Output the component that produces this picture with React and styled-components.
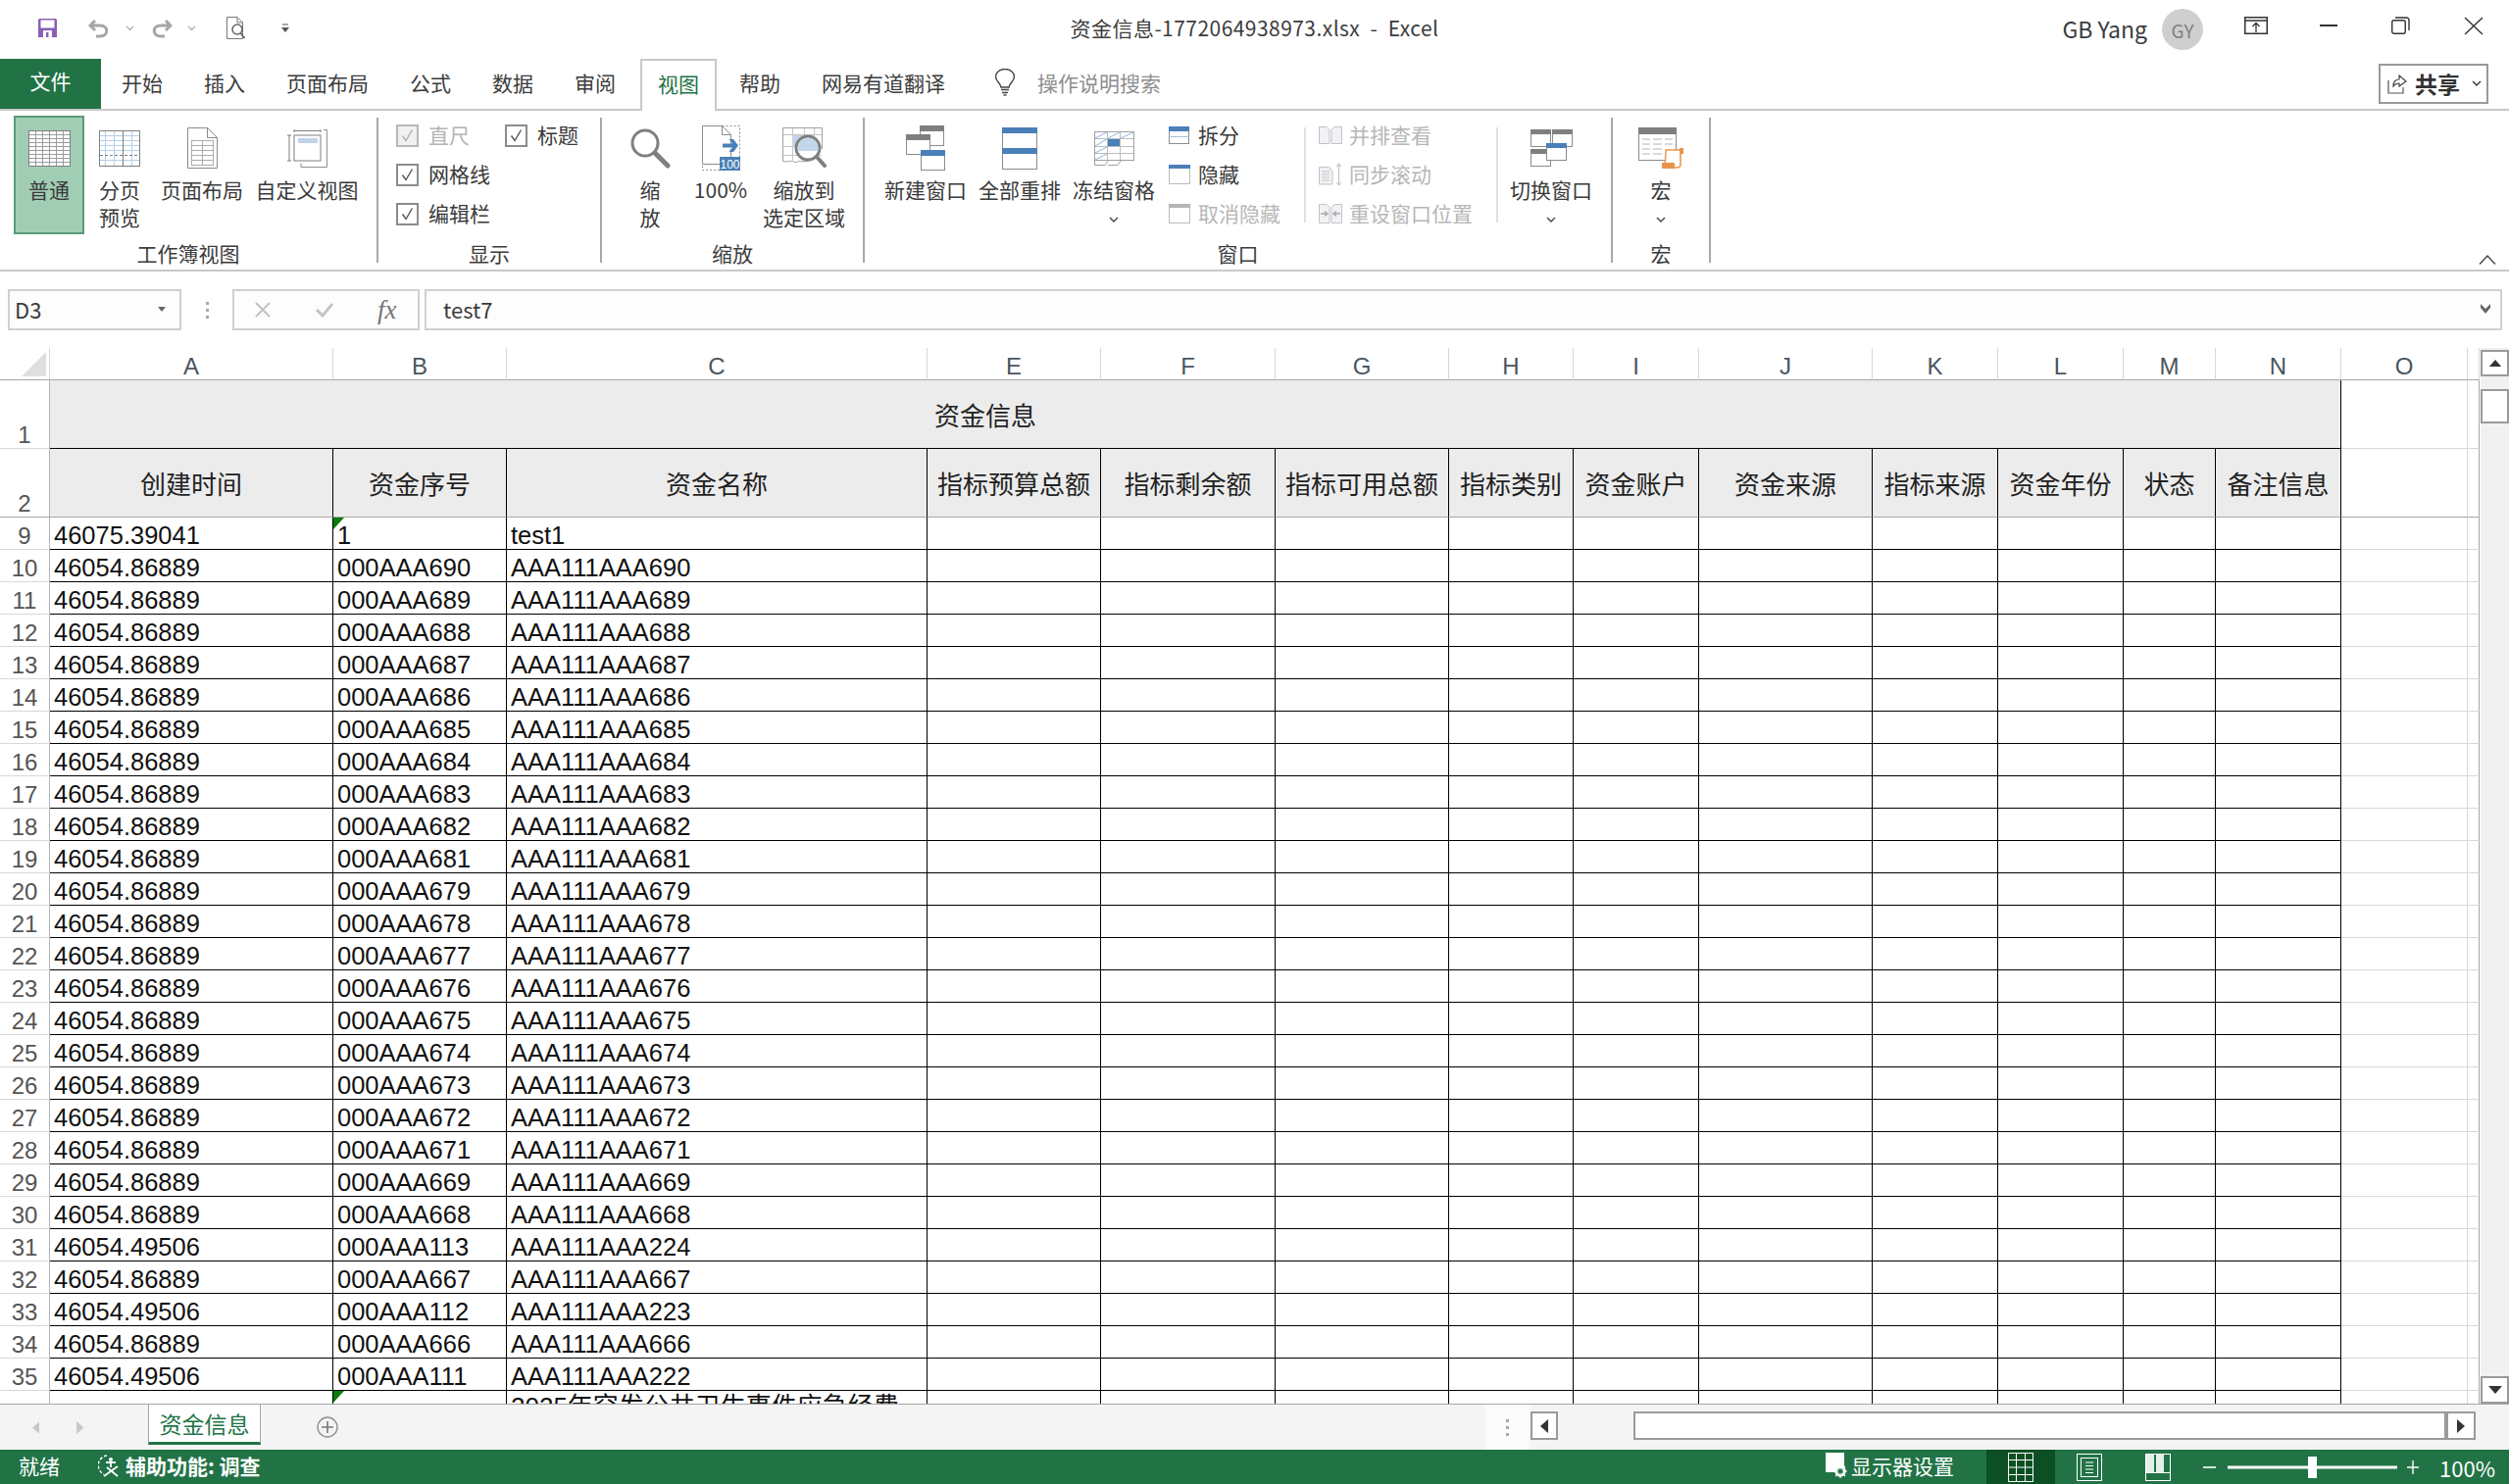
import React from 'react';
import styled, { createGlobalStyle } from 'styled-components';

const UI_FONT = '"Noto Sans CJK SC", "Noto Sans", sans-serif';
const CELL_FONT = '"Liberation Sans", "Noto Sans CJK SC", sans-serif';
const GREEN = '#217346';

const GlobalStyle = createGlobalStyle`
  html, body {
    margin: 0;
    padding: 0;
    background: #fff;
    overflow: hidden;
  }
  body {
    font-family: ${UI_FONT};
    color: #3a3a3a;
  }
`;

const Window = styled.div`
  width: 2559px;
  height: 1514px;
  display: flex;
  flex-direction: column;
  overflow: hidden;
  background: #fff;
  font-size: 21px;
`;

/* title bar */
const TitleBar = styled.div`
  height: 60px;
  display: grid;
  grid-template-columns: 1fr auto 1fr;
  align-items: center;
`;

const Qat = styled.div`
  display: flex;
  align-items: center;
  padding: 0 0 3px 39px;
`;

const QatSlot = styled.span`
  display: inline-flex;
  margin-left: ${(p) => p.$left || 0}px;
`;

const TitleText = styled.div`
  font-size: 21px;
  line-height: 28px;
  letter-spacing: 0.45px;
  padding-bottom: 5px;
  white-space: pre;
  color: #3c3c3c;
`;

const TitleRight = styled.div`
  display: flex;
  align-items: center;
  justify-content: flex-end;
  padding-right: 26px;
`;

const UserName = styled.span`
  font-size: 23px;
  padding-bottom: 2px;
  color: #3c3c3c;
`;

const Avatar = styled.span`
  width: 42px;
  height: 42px;
  margin-left: 15px;
  border-radius: 50%;
  background: #cfcfcf;
  color: #808080;
  font-size: 19px;
  display: flex;
  align-items: center;
  justify-content: center;
`;

const WinButton = styled.span`
  display: inline-flex;
  margin-left: ${(p) => p.$left}px;
  margin-top: -8px;
`;

/* ribbon tabs */
const TabBar = styled.div`
  height: 53px;
  box-sizing: border-box;
  display: flex;
  border-bottom: 2px solid #c9c9c9;
`;

const FileTab = styled.div`
  width: 103px;
  height: 51px;
  background: ${GREEN};
  color: #fff;
  display: flex;
  align-items: center;
  justify-content: center;
  padding-bottom: 7px;
  box-sizing: border-box;
`;

const RibbonTab = styled.div`
  height: 51px;
  box-sizing: border-box;
  padding: 0 21px 3px;
  display: flex;
  align-items: center;
  color: #3c3c3c;
`;

const ActiveTab = styled.div`
  height: 53px;
  box-sizing: border-box;
  margin: 0 2px 0 4px;
  padding: 0 16px 5px;
  display: flex;
  align-items: center;
  color: ${GREEN};
  background: #fff;
  border: 2px solid #c9c9c9;
  border-bottom: none;
`;

const SearchHint = styled.div`
  display: flex;
  align-items: center;
  gap: 22px;
  margin-left: 29px;
  height: 51px;
  box-sizing: border-box;
  padding-bottom: 3px;
  color: #8e8e8e;
`;

const ShareButton = styled.div`
  margin: 5px 21px 0 auto;
  width: 112px;
  height: 41px;
  box-sizing: border-box;
  border: 2px solid #9a9a9a;
  display: flex;
  align-items: center;
  padding: 0 0 2px 7px;
  font-weight: 700;
  font-size: 23px;
  color: #333;
`;

const ShareLabel = styled.span`
  margin: 0 12px 0 8px;
`;

/* ribbon */
const Ribbon = styled.div`
  height: 164px;
  box-sizing: border-box;
  padding-top: 5px;
  display: flex;
  align-items: flex-start;
  border-bottom: 2px solid #c9c9c9;
`;

const Group = styled.div`
  width: ${(p) => p.$w}px;
  height: 154px;
  display: flex;
  flex-direction: column;
`;

const GroupBody = styled.div`
  height: 128px;
  display: flex;
  padding-left: ${(p) => p.$pad || 0}px;
`;

const GroupLabel = styled.div`
  height: 24px;
  line-height: 24px;
  text-align: center;
  color: #3c3c3c;
`;

const GroupSep = styled.div`
  width: 2px;
  height: 148px;
  margin-top: 2px;
  background: #a8a8a8;
  flex: none;
`;

const LargeButton = styled.div`
  width: ${(p) => p.$w}px;
  height: 121px;
  box-sizing: border-box;
  flex: none;
  display: flex;
  flex-direction: column;
  align-items: center;
  border: 2px solid ${(p) => (p.$active ? '#5a9a78' : 'transparent')};
  background: ${(p) => (p.$active ? '#a2cdb5' : 'transparent')};
`;

const IconSlot = styled.div`
  height: 62px;
  margin-bottom: -3px;
  flex: none;
  display: flex;
  align-items: center;
  justify-content: center;
`;

const ButtonLabel = styled.div`
  line-height: 28px;
  text-align: center;
  white-space: nowrap;
  color: #3a3a3a;
`;

const ChevronLine = styled.div`
  height: 28px;
  margin-top: 3px;
  display: flex;
  align-items: center;
  justify-content: center;
`;

const CheckGrid = styled.div`
  display: grid;
  grid-template-columns: 111px 80px;
  grid-auto-rows: 40px;
  padding-left: 18px;
`;

const CheckRow = styled.div`
  display: flex;
  align-items: center;
  gap: 10px;
  color: ${(p) => (p.$off ? '#b4b4b4' : '#3a3a3a')};
`;

const CheckBox = styled.span`
  width: 23px;
  height: 23px;
  box-sizing: border-box;
  border: 2px solid ${(p) => (p.$off ? '#b8b8b8' : '#8c8c8c')};
  background: ${(p) => (p.$off ? '#f1f1f1' : '#fff')};
  display: flex;
  align-items: center;
  justify-content: center;
`;

const ActionText = styled.span`
  margin-top: -3px;
`;

const SmallColumn = styled.div`
  width: ${(p) => p.$w}px;
  flex: none;
  box-sizing: border-box;
  padding-left: ${(p) => p.$pad}px;
`;

const SmallAction = styled.div`
  height: 40px;
  display: flex;
  align-items: center;
  white-space: nowrap;
  color: ${(p) => (p.$off ? '#b6b6b6' : '#3a3a3a')};
`;

const SmallIcon = styled.span`
  width: ${(p) => p.$w}px;
  display: inline-flex;
  flex: none;
`;

const ThinSep = styled.div`
  width: 2px;
  height: 97px;
  margin-top: 12px;
  background: #e0e0e0;
  flex: none;
`;

const CollapseArrow = styled.div`
  margin: 142px 13px 0 auto;
  display: flex;
`;

/* formula bar */
const FormulaBar = styled.div`
  height: 42px;
  margin-top: 18px;
  display: flex;
  padding: 0 7px 0 8px;
`;

const NameBox = styled.div`
  width: 177px;
  box-sizing: border-box;
  border: 2px solid #d0d0d0;
  background: #fdfdfd;
  display: flex;
  align-items: center;
  justify-content: space-between;
  padding: 0 14px 2px 5px;
  font-size: 22px;
`;

const BarDots = styled.div`
  width: 52px;
  display: flex;
  align-items: center;
  justify-content: center;
`;

const FnBox = styled.div`
  width: 191px;
  box-sizing: border-box;
  border: 2px solid #d0d0d0;
  background: #fdfdfd;
  display: flex;
  align-items: center;
  gap: 44px;
  padding-left: 20px;
  margin-right: 5px;
`;

const FnMark = styled.span`
  font-family: "Liberation Serif", serif;
  font-style: italic;
  font-size: 27px;
  line-height: 30px;
  color: #777;
`;

const FormulaInput = styled.div`
  flex: 1;
  box-sizing: border-box;
  border: 2px solid #d0d0d0;
  background: #fdfdfd;
  display: flex;
  align-items: center;
  justify-content: space-between;
  padding: 0 9px 2px 17px;
  font-size: 22px;
`;

/* sheet */
const SheetArea = styled.div`
  height: 1077px;
  margin-top: 18px;
  display: flex;
`;

const SheetGrid = styled.div`
  width: 2530px;
  height: 1077px;
  overflow: hidden;
  display: grid;
  grid-template-columns: 51px 289px 177px 429px 177px 178px 177px 127px 128px 177px 128px 128px 94px 128px 129px 12px;
  grid-template-rows: 33px 70px 70px repeat(27, 33px) 60px;
  align-content: start;
`;

const CornerCell = styled.div`
  box-sizing: border-box;
  position: relative;
  border-bottom: 1px solid #a6a6a6;
  border-right: 1px solid #d8d8d8;
  &::after {
    content: '';
    position: absolute;
    right: 3px;
    bottom: 3px;
    border-style: solid;
    border-width: 0 0 25px 25px;
    border-color: transparent transparent #dfdfdf transparent;
  }
`;

const ColHead = styled.div`
  box-sizing: border-box;
  border-bottom: 1px solid #a6a6a6;
  border-right: 1px solid #d8d8d8;
  font-family: ${CELL_FONT};
  font-size: 24px;
  line-height: 32px;
  padding-top: 3px;
  text-align: center;
  color: #4a5560;
`;

const RowHead = styled.div`
  box-sizing: border-box;
  border-bottom: 1px solid ${(p) => (p.$frozen ? '#a6a6a6' : '#d8d8d8')};
  border-right: 1px solid #b4b4b4;
  font-family: ${CELL_FONT};
  font-size: 24px;
  line-height: 26px;
  text-align: center;
  color: #555;
  display: flex;
  align-items: flex-end;
  justify-content: center;
`;

const TitleCell = styled.div`
  grid-column: 2 / 15;
  box-sizing: border-box;
  background: #ececec;
  border-bottom: 1px solid #000;
  border-right: 1px solid #000;
  display: flex;
  align-items: center;
  padding-left: 902px;
  font-size: 26px;
  color: #222;
`;

const HeadCell = styled.div`
  box-sizing: border-box;
  background: #ececec;
  border-bottom: 1px solid #a6a6a6;
  border-right: 1px solid #000;
  display: flex;
  align-items: center;
  justify-content: center;
  font-size: 26px;
  white-space: nowrap;
  color: #222;
`;

const DataCell = styled.div`
  position: relative;
  box-sizing: border-box;
  overflow: hidden;
  border-bottom: 1px solid #000;
  border-right: 1px solid #000;
  padding-left: 4px;
  font-family: ${CELL_FONT};
  font-size: ${(p) => (p.$tall ? '26px' : '25.5px')};
  line-height: ${(p) => (p.$tall ? '33px' : '36px')};
  white-space: nowrap;
  color: #111;
  &::before {
    content: ${(p) => (p.$flag ? "''" : 'none')};
    position: absolute;
    left: 0;
    top: 0;
    border-style: solid;
    border-width: 12px 11px 0 0;
    border-color: #0a7d0a transparent transparent transparent;
  }
`;

const BlankCell = styled.div`
  box-sizing: border-box;
  border-bottom: 1px solid ${(p) => (p.$frozen ? '#a6a6a6' : '#d8d8d8')};
  border-right: 1px solid ${(p) => (p.$edge ? '#a6a6a6' : '#d8d8d8')};
`;

const VScroll = styled.div`
  width: 29px;
  background: #f1f1f1;
  display: flex;
  flex-direction: column;
`;

const ScrollButton = styled.div`
  box-sizing: border-box;
  flex: none;
  width: ${(p) => p.$w || 29}px;
  height: ${(p) => p.$h || 29}px;
  margin-top: ${(p) => p.$top || 0};
  border: 2px solid #9a9a9a;
  background: #fff;
  display: flex;
  align-items: center;
  justify-content: center;
`;

/* sheet tabs */
const TabStrip = styled.div`
  height: 47px;
  box-sizing: border-box;
  background: #f4f4f4;
  border-top: 1px solid #a6a6a6;
  display: flex;
`;

const TabNav = styled.div`
  width: 151px;
  height: 46px;
  display: flex;
  align-items: center;
  padding-left: 33px;
  box-sizing: border-box;
  gap: 38px;
`;

const SheetTab = styled.div`
  width: 115px;
  height: 41px;
  box-sizing: border-box;
  background: #fff;
  border-left: 1px solid #a6a6a6;
  border-right: 1px solid #a6a6a6;
  border-bottom: 3px solid ${GREEN};
  color: ${GREEN};
  font-size: 23px;
  display: flex;
  align-items: center;
  justify-content: center;
`;

const AddSheet = styled.div`
  margin-left: 57px;
  height: 46px;
  display: flex;
  align-items: center;
`;

const GripZone = styled.div`
  margin-left: auto;
  width: 45px;
  height: 46px;
  background: #fbfbfb;
  display: flex;
  align-items: center;
  justify-content: center;
`;

const HScroll = styled.div`
  display: flex;
  margin: 7px 34px 0 1px;
  height: 29px;
`;

const HThumb = styled.div`
  width: 829px;
  height: 29px;
  margin-left: 77px;
  box-sizing: border-box;
  border: 2px solid #9a9a9a;
  background: #fff;
`;

/* status bar */
const StatusBar = styled.div`
  height: 35px;
  background: ${GREEN};
  color: #fff;
  display: flex;
  align-items: center;
  font-size: 21px;
`;

const StatusReady = styled.span`
  margin: -3px 0 0 19px;
`;

const AccessItem = styled.span`
  margin: -3px 0 0 39px;
  display: flex;
  align-items: center;
  gap: 5px;
  font-weight: 700;
`;

const DisplayItem = styled.span`
  margin: -3px 0 0 auto;
  display: flex;
  align-items: center;
  gap: 4px;
`;

const ViewButton = styled.span`
  width: 70px;
  height: 35px;
  margin-left: ${(p) => p.$left || 0}px;
  background: ${(p) => (p.$active ? '#0b4f22' : 'transparent')};
  display: flex;
  align-items: center;
  justify-content: center;
`;

const ZoomSlider = styled.span`
  display: flex;
  margin-left: 11px;
`;

const ZoomPercent = styled.span`
  margin: 0 14px 0 21px;
  font-size: 22px;
`;

/* drawings */
const Lines = ({ xs = [], ys = [], x1, x2, y1, y2, stroke, dash }) => (
  <g stroke={stroke} strokeWidth="1" strokeDasharray={dash}>
    {xs.map((x) => <line key={`x${x}`} x1={x} x2={x} y1={y1} y2={y2} />)}
    {ys.map((y) => <line key={`y${y}`} y1={y} y2={y} x1={x1} x2={x2} />)}
  </g>
);

const NormalIcon = () => (
  <svg width="43" height="37" viewBox="0 0 43 37">
    <rect x=".5" y=".5" width="42" height="36" fill="#fff" stroke="#7f7f7f" />
    <Lines xs={[7.5, 14.5, 21.5, 28.5, 35.5]} ys={[4.5, 8.5, 12.5, 16.5, 20.5, 24.5, 28.5, 32.5]} x1={1} x2={42} y1={1} y2={36} stroke="#9c9c9c" />
  </svg>
);

const PageBreakIcon = () => (
  <svg width="42" height="37" viewBox="0 0 42 37">
    <rect x=".5" y=".5" width="41" height="36" fill="#fff" stroke="#7f7f7f" />
    <Lines xs={[6.5, 15.5, 33.5]} ys={[5.5, 10.5, 15.5, 20.5, 30.5]} x1={1} x2={41} y1={1} y2={36} stroke="#b6cfe9" />
    <line x1="24.5" x2="24.5" y1="1" y2="36" stroke="#7f7f7f" />
    <line x1="1" x2="41" y1="25.5" y2="25.5" stroke="#7f7f7f" strokeDasharray="3 2" />
  </svg>
);

const PageLayoutIcon = () => (
  <svg width="31" height="43" viewBox="0 0 31 43">
    <path d="M.5.5H20.5L30.5 10.5V41.5H.5Z" fill="#fff" stroke="#8c8c8c" />
    <path d="M20.5.5V10.5H30.5" fill="none" stroke="#8c8c8c" />
    <rect x="4.5" y="13.5" width="22" height="25" fill="none" stroke="#ababab" />
    <Lines xs={[15.5]} ys={[18.5, 23.5, 28.5, 33.5]} x1={5} x2={26} y1={14} y2={38} stroke="#ababab" />
  </svg>
);

const CustomViewIcon = () => (
  <svg width="42" height="40" viewBox="0 0 42 40">
    <rect x="8" y="7" width="27" height="26" fill="#fff" stroke="#7f7f7f" />
    <rect x="12" y="10" width="20" height="5" fill="#c0d4e8" />
    <path d="M8 1V4M35 1V4M8 2.5H35M1 7H5M3 7V33M1 33H5" fill="none" stroke="#7f7f7f" />
    <path d="M38 1.5H41.5V39.5H15V35.5" fill="none" stroke="#8f8f8f" />
  </svg>
);

const MagnifierIcon = () => (
  <svg width="41" height="41" viewBox="0 0 41 41">
    <circle cx="15" cy="15" r="13" fill="#fff" stroke="#7f7f7f" strokeWidth="3" />
    <line x1="25" y1="25" x2="38" y2="38" stroke="#7f7f7f" strokeWidth="5" strokeLinecap="round" />
  </svg>
);

const HundredIcon = () => (
  <svg width="39" height="46" viewBox="0 0 39 46">
    <path d="M20.5.5H38.5V32M18 45.5H.5V39" fill="none" stroke="#8f8f8f" strokeDasharray="2 2" />
    <path d="M.5 39.5V.5H20.5L29.5 9.5V19M29.5 24V32M.5 39.5H18" fill="#fff" stroke="#8c8c8c" />
    <path d="M20.5.5V9.5H29.5" fill="none" stroke="#8c8c8c" />
    <path d="M21 18.5H31L27.5 14H32L37 20.5L32 27H27.5L31 22.5H21Z" fill="#4a7fb8" />
    <rect x="18" y="32" width="21" height="14" fill="#4a7fb8" />
    <text x="28.5" y="43.5" textAnchor="middle" fontSize="12" fill="#fff" fontFamily="Liberation Sans">100</text>
  </svg>
);

const ZoomSelectionIcon = () => (
  <svg width="45" height="42" viewBox="0 0 45 42">
    <path d="M.5 34.5V.5H40.5V22M.5 34.5C8 36 10 32 13 36C18 33 22 36 27 34" fill="#fff" stroke="#a0a0a0" />
    <Lines xs={[10.5, 22.5, 32.5]} ys={[7.5, 19.5, 28.5]} x1={1} x2={40} y1={1} y2={33} stroke="#c4c4c4" />
    <rect x="10" y="8" width="12" height="11" fill="#c3d6ea" />
    <circle cx="26" cy="21" r="12" fill="#fff" stroke="#7f7f7f" strokeWidth="3" />
    <path d="M15.5 21A10.5 10.5 0 0 1 36.5 21V24H15.5Z" fill="#c3d6ea" />
    <line x1="35" y1="30" x2="43" y2="39" stroke="#7f7f7f" strokeWidth="4" strokeLinecap="round" />
  </svg>
);

const MiniWindow = ({ x, y, w, h, head = '#7f7f7f', band = 6 }) => (
  <g>
    <rect x={x + 0.5} y={y + 0.5} width={w - 1} height={h - 1} fill="#fff" stroke="#8c8c8c" />
    <rect x={x} y={y} width={w} height={band} fill={head} />
  </g>
);

const NewWindowIcon = () => (
  <svg width="40" height="46" viewBox="0 0 40 46">
    <MiniWindow x={14} y={0} w={25} h={21} />
    <MiniWindow x={0} y={9} w={25} h={21} />
    <MiniWindow x={15} y={25} w={25} h={21} head="#4a7fb8" />
  </svg>
);

const ArrangeIcon = () => (
  <svg width="36" height="43" viewBox="0 0 36 43">
    <rect x=".5" y=".5" width="35" height="42" fill="#fff" stroke="#8c8c8c" />
    <rect width="36" height="6" fill="#4a7fb8" />
    <rect y="21" width="36" height="6" fill="#4a7fb8" />
  </svg>
);

const FreezeIcon = () => (
  <svg width="41" height="35" viewBox="0 0 41 35">
    <rect x=".5" y=".5" width="40" height="29" fill="#fff" stroke="#a0a0a0" />
    <Lines xs={[13.5, 26.5]} ys={[7.5, 15.5, 22.5]} x1={1} x2={40} y1={1} y2={29} stroke="#bdbdbd" />
    <rect x="14" y="8" width="12" height="7" fill="#4a7fb8" />
    <path d="M1 7L13 1M14 7L26 1M27 7L40 1M1 15L13 8M1 22L13 16M1 29L13 23" stroke="#8db4df" strokeWidth="1" />
    <path d="M.5 30V34.5H11L14 30M14 34.5H24L27 30" fill="none" stroke="#a0a0a0" />
  </svg>
);

const SplitIcon = () => (
  <svg width="21" height="18" viewBox="0 0 21 18">
    <rect x=".5" y=".5" width="20" height="17" fill="#fff" stroke="#8c8c8c" />
    <rect width="21" height="5" fill="#4a7fb8" />
    <line x1="2" x2="19" y1="10.5" y2="10.5" stroke="#4a7fb8" strokeDasharray="1 1" />
  </svg>
);

const HideIcon = () => (
  <svg width="22" height="20" viewBox="0 0 22 20">
    <rect x=".5" y=".5" width="21" height="19" fill="#fff" stroke="#777" strokeDasharray="1 1" />
    <rect width="22" height="4" fill="#4a7fb8" />
  </svg>
);

const UnhideIcon = () => (
  <svg width="22" height="20" viewBox="0 0 22 20">
    <rect x=".5" y=".5" width="21" height="19" fill="#fff" stroke="#bcbcbc" />
    <rect width="22" height="4" fill="#b4b4b4" />
  </svg>
);

const SideBySideIcon = () => (
  <svg width="24" height="18" viewBox="0 0 24 18">
    <path d="M.5.5H8L11 3.5V17.5H.5ZM13 3.5L16 .5H23.5V17.5H13Z" fill="#f4f0f6" stroke="#c4c4c4" />
  </svg>
);

const SyncScrollIcon = () => (
  <svg width="24" height="24" viewBox="0 0 24 24">
    <path d="M.5 4.5H10L14 8V22H.5Z" fill="#f4f0f6" stroke="#c4c4c4" />
    <path d="M3 9H11M3 12H11M3 15H11M3 18H11" stroke="#c4c4c4" />
    <path d="M20.5 1V23M18 4L20.5 1L23 4M18 20L20.5 23L23 20" fill="none" stroke="#bcbcbc" />
  </svg>
);

const ResetPosIcon = () => (
  <svg width="24" height="20" viewBox="0 0 24 20">
    <path d="M.5.5H8L11 3.5V19.5H.5ZM13 3.5L16 .5H23.5V19.5H13Z" fill="#f4f0f6" stroke="#c4c4c4" />
    <path d="M2 10H8M6 7.5L9 10L6 12.5M22 10H15M18 7.5L15 10L18 12.5" fill="none" stroke="#aaa" strokeWidth="1.5" />
  </svg>
);

const SwitchWindowIcon = () => (
  <svg width="43" height="38" viewBox="0 0 43 38">
    <MiniWindow x={0} y={0} w={21} h={18} band={5} />
    <MiniWindow x={22} y={0} w={21} h={18} band={5} />
    <MiniWindow x={0} y={20} w={21} h={18} band={5} />
    <MiniWindow x={16} y={14} w={21} h={18} head="#4a7fb8" band={5} />
  </svg>
);

const MacroIcon = () => (
  <svg width="46" height="42" viewBox="0 0 46 42">
    <rect x=".5" y=".5" width="38" height="33" fill="#fff" stroke="#8c8c8c" />
    <rect width="39" height="7" fill="#7f7f7f" />
    <path d="M4 12H12M15 12H24M27 12H35M4 17H12M15 17H24M27 17H35M4 22H12M15 22H24M4 27H12M15 27H24" stroke="#b4b4b4" />
    <path d="M28 23H43V38C43 41 40 41 39 41H27C27 38 28 30 28 23Z" fill="#fff" stroke="#e8944a" strokeWidth="1.5" />
    <path d="M42 21H46V27H42ZM24 36H37V42H24Z" fill="#e8944a" />
  </svg>
);

const Chevron = ({ color = '#444', w = 10 }) => (
  <svg width={w} height={w * 0.6} viewBox="0 0 10 6">
    <path d="M1 1L5 5L9 1" fill="none" stroke={color} strokeWidth="1.4" />
  </svg>
);

const CheckMark = ({ off }) => (
  <svg width="13" height="14" viewBox="0 0 13 14">
    <path d="M1.5 7.5L5 12.5L11.5 1.5" fill="none" stroke={off ? '#b0b0b0' : '#555'} strokeWidth="1.4" />
  </svg>
);

const SaveIcon = () => (
  <svg width="19" height="19" viewBox="0 0 19 19">
    <path d="M0 1.5A1.5 1.5 0 0 1 1.5 0H17.5A1.5 1.5 0 0 1 19 1.5V19H0Z" fill="#8a5fb5" />
    <rect x="2.5" y="1.5" width="14" height="8" fill="#fff" />
    <rect x="5" y="12" width="9" height="7" fill="#fff" />
    <rect x="8" y="14" width="2.5" height="5" fill="#8a5fb5" />
  </svg>
);

const UndoIcon = ({ flip }) => (
  <svg width="22" height="20" viewBox="0 0 22 20" style={flip ? { transform: 'scaleX(-1)' } : undefined}>
    <path d="M2 7H12C21 7 21 18 12 18H8M7 2L2 7L7 12" fill="none" stroke="#a6a6a6" strokeWidth="3" />
  </svg>
);

const PreviewIcon = () => (
  <svg width="20" height="23" viewBox="0 0 20 23">
    <path d="M.5.5H11L16.5 6V22.5H.5Z" fill="#fff" stroke="#777" />
    <path d="M11 .5V6H16.5" fill="none" stroke="#777" />
    <circle cx="11" cy="13" r="5" fill="#fff" stroke="#666" strokeWidth="1.5" />
    <line x1="14.5" y1="17" x2="18.5" y2="22" stroke="#666" strokeWidth="1.8" />
  </svg>
);

const CustomizeIcon = () => (
  <svg width="8" height="10" viewBox="0 0 8 10">
    <path d="M1 1H7" stroke="#555" />
    <path d="M0 4H8L4 9Z" fill="#555" />
  </svg>
);

const RibbonDisplayIcon = () => (
  <svg width="24" height="18" viewBox="0 0 24 18">
    <rect x=".75" y=".75" width="22.5" height="16.5" fill="none" stroke="#333" strokeWidth="1.5" />
    <path d="M1 4H23M12 16V7M8.5 10L12 6.5L15.5 10" fill="none" stroke="#333" strokeWidth="1.3" />
  </svg>
);

const MinimizeIcon = () => (
  <svg width="18" height="2" viewBox="0 0 18 2"><rect width="18" height="2" fill="#333" /></svg>
);

const RestoreIcon = () => (
  <svg width="19" height="18" viewBox="0 0 19 18">
    <rect x=".75" y="3.75" width="13.5" height="13.5" rx="2" fill="none" stroke="#333" strokeWidth="1.4" />
    <path d="M4 1H15.5A2.5 2.5 0 0 1 18 3.5V14" fill="none" stroke="#333" strokeWidth="1.4" />
  </svg>
);

const CloseIcon = () => (
  <svg width="20" height="19" viewBox="0 0 20 19">
    <path d="M1 1L19 18M19 1L1 18" stroke="#333" strokeWidth="1.4" />
  </svg>
);

const BulbIcon = () => (
  <svg width="22" height="28" viewBox="0 0 22 28">
    <path d="M7 19C6 14 1.5 13 1.5 8A9.5 7.5 0 0 1 20.5 8C20.5 13 16 14 15 19Z" fill="#fff" stroke="#444" strokeWidth="1.4" />
    <path d="M7 21.5H15M8 24.5H14M9.5 27H12.5" stroke="#444" strokeWidth="1.6" />
  </svg>
);

const ShareIcon = () => (
  <svg width="20" height="22" viewBox="0 0 20 22">
    <path d="M1 8V21H16V15" fill="none" stroke="#555" strokeWidth="1.2" />
    <path d="M6 14C6 9 9 7 12 7V3L19 9L12 14V11C9 11 7.5 12 6 14Z" fill="#fff" stroke="#444" strokeWidth="1.2" />
  </svg>
);

const CaretDown = () => (
  <svg width="8" height="5" viewBox="0 0 8 5"><path d="M0 0H8L4 5Z" fill="#666" /></svg>
);

const GripDots = ({ color = '#a8a8a8' }) => (
  <svg width="3" height="17" viewBox="0 0 3 17">
    <path d="M0 0H3V3H0ZM0 7H3V10H0ZM0 14H3V17H0Z" fill={color} />
  </svg>
);

const CrossMark = () => (
  <svg width="18" height="16" viewBox="0 0 18 16">
    <path d="M2 1L16 15M16 1L2 15" stroke="#c4c4c4" strokeWidth="2.2" />
  </svg>
);

const TickMark = () => (
  <svg width="20" height="16" viewBox="0 0 20 16">
    <path d="M2 8L8 14L18 2" fill="none" stroke="#c4c4c4" strokeWidth="3" />
  </svg>
);

const ScrollArrow = ({ dir, color = '#333', size = 14 }) => {
  const pts = {
    up: '0,8 14,8 7,0',
    down: '0,0 14,0 7,8',
    left: '8,0 8,14 0,7',
    right: '0,0 0,14 8,7',
  };
  const horizontal = dir === 'left' || dir === 'right';
  return (
    <svg width={horizontal ? size * 0.57 : size} height={horizontal ? size : size * 0.57} viewBox={horizontal ? '0 0 8 14' : '0 0 14 8'}>
      <polygon points={pts[dir]} fill={color} />
    </svg>
  );
};

const DoubleChevron = () => (
  <svg width="12" height="12" viewBox="0 0 12 12">
    <path d="M1 1L6 6L11 1V5L6 11L1 5Z" fill="#666" />
  </svg>
);

const AddSheetIcon = () => (
  <svg width="22" height="22" viewBox="0 0 22 22">
    <circle cx="11" cy="11" r="10" fill="none" stroke="#8f8f8f" strokeWidth="1.4" />
    <path d="M11 5V17M5 11H17" stroke="#777" strokeWidth="1.6" />
  </svg>
);

const AccessIcon = () => (
  <svg width="23" height="24" viewBox="0 0 23 24">
    <path d="M9 2A10 10 0 0 0 6 21" fill="none" stroke="#fff" strokeWidth="1.6" strokeDasharray="3 2" />
    <circle cx="13" cy="6" r="2" fill="#fff" />
    <path d="M8 9H18M13 9V14M6 23L20 13M9 14L20 23" stroke="#fff" strokeWidth="1.8" />
  </svg>
);

const DisplayIcon = () => (
  <svg width="22" height="26" viewBox="0 0 22 26">
    <path d="M0 0H19V15H13V20H0Z" fill="#fff" />
    <circle cx="15" cy="19" r="4.5" fill={GREEN} stroke="#fff" strokeWidth="2.5" />
    <path d="M15 12V26M8 19H22M10 14L20 24M20 14L10 24" stroke="#fff" strokeWidth="1.2" />
    <circle cx="15" cy="19" r="2.2" fill={GREEN} />
  </svg>
);

const GridViewIcon = () => (
  <svg width="26" height="30" viewBox="0 0 26 30">
    <rect x=".5" y=".5" width="25" height="29" fill="none" stroke="#fff" />
    <path d="M8.5 0V30M17.5 0V30M0 7.5H26M0 15H26M0 22.5H26" stroke="#fff" />
  </svg>
);

const LayoutViewIcon = () => (
  <svg width="26" height="28" viewBox="0 0 26 28">
    <rect x=".5" y=".5" width="25" height="27" fill="none" stroke="#fff" />
    <rect x="4.5" y="4.5" width="17" height="19" fill="none" stroke="#fff" />
    <path d="M9 9H17M9 12.5H17M9 16H17M9 19.5H17" stroke="#fff" />
  </svg>
);

const BreakViewIcon = () => (
  <svg width="26" height="28" viewBox="0 0 26 28">
    <rect x=".5" y=".5" width="25" height="27" fill="none" stroke="#fff" />
    <rect x="1" y="1" width="8" height="18" fill="#e5efe9" />
    <rect x="11" y="1" width="8" height="18" fill="#e5efe9" />
    <path d="M0 19.5H26" stroke="#fff" />
  </svg>
);

const SliderIcon = () => (
  <svg width="220" height="26" viewBox="0 0 220 26">
    <path d="M0 13H13" stroke="#fff" strokeWidth="1.6" />
    <rect x="25" y="11.5" width="173" height="3" fill="#fff" />
    <rect x="107" y="2" width="9" height="22" fill="#fff" />
    <path d="M208 13H220M214 6V20" stroke="#fff" strokeWidth="1.4" />
  </svg>
);

/* data */
const COLS = ['A', 'B', 'C', 'E', 'F', 'G', 'H', 'I', 'J', 'K', 'L', 'M', 'N', 'O', ''];
const HEADS = ['创建时间', '资金序号', '资金名称', '指标预算总额', '指标剩余额', '指标可用总额', '指标类别', '资金账户', '资金来源', '指标来源', '资金年份', '状态', '备注信息'];
const BLANK_DATA_COLS = 10;

const row = (n, time, code, tail) => [n, `460${time}`, `000AAA${code}`, `AAA111AAA${tail || code}`];
const ROWS = [
  [9, '46075.39041', '1', 'test1'],
  row(10, '54.86889', '690'), row(11, '54.86889', '689'), row(12, '54.86889', '688'),
  row(13, '54.86889', '687'), row(14, '54.86889', '686'), row(15, '54.86889', '685'),
  row(16, '54.86889', '684'), row(17, '54.86889', '683'), row(18, '54.86889', '682'),
  row(19, '54.86889', '681'), row(20, '54.86889', '679'), row(21, '54.86889', '678'),
  row(22, '54.86889', '677'), row(23, '54.86889', '676'), row(24, '54.86889', '675'),
  row(25, '54.86889', '674'), row(26, '54.86889', '673'), row(27, '54.86889', '672'),
  row(28, '54.86889', '671'), row(29, '54.86889', '669'), row(30, '54.86889', '668'),
  row(31, '54.49506', '113', '224'), row(32, '54.86889', '667'), row(33, '54.49506', '112', '223'),
  row(34, '54.86889', '666'), row(35, '54.49506', '111', '222'),
];

const Big = ({ w, active, icon, lines, chevron }) => (
  <LargeButton $w={w} $active={active}>
    <IconSlot>{icon}</IconSlot>
    {lines.map((t) => <ButtonLabel key={t}>{t}</ButtonLabel>)}
    {chevron && <ChevronLine><Chevron /></ChevronLine>}
  </LargeButton>
);

const Check = ({ label, off }) => (
  <CheckRow $off={off}>
    <CheckBox $off={off}><CheckMark off={off} /></CheckBox>
    <ActionText>{label}</ActionText>
  </CheckRow>
);

const Small = ({ off, w, icon, label }) => (
  <SmallAction $off={off}>
    <SmallIcon $w={w}>{icon}</SmallIcon>
    <ActionText>{label}</ActionText>
  </SmallAction>
);

const TrailingCells = ({ frozen }) => (
  <>
    <BlankCell $frozen={frozen} />
    <BlankCell $frozen={frozen} $edge />
  </>
);

const App = () => (
  <Window>
    <GlobalStyle />
    <TitleBar>
      <Qat>
        <QatSlot><SaveIcon /></QatSlot>
        <QatSlot $left={32}><UndoIcon /></QatSlot>
        <QatSlot $left={16}><Chevron color="#aaa" w={9} /></QatSlot>
        <QatSlot $left={17}><UndoIcon flip /></QatSlot>
        <QatSlot $left={15}><Chevron color="#aaa" w={9} /></QatSlot>
        <QatSlot $left={31}><PreviewIcon /></QatSlot>
        <QatSlot $left={36}><CustomizeIcon /></QatSlot>
      </Qat>
      <TitleText>资金信息-1772064938973.xlsx  -  Excel</TitleText>
      <TitleRight>
        <UserName>GB Yang</UserName>
        <Avatar>GY</Avatar>
        <WinButton $left={42}><RibbonDisplayIcon /></WinButton>
        <WinButton $left={53}><MinimizeIcon /></WinButton>
        <WinButton $left={55}><RestoreIcon /></WinButton>
        <WinButton $left={55}><CloseIcon /></WinButton>
      </TitleRight>
    </TitleBar>

    <TabBar>
      <FileTab>文件</FileTab>
      <RibbonTab>开始</RibbonTab>
      <RibbonTab>插入</RibbonTab>
      <RibbonTab>页面布局</RibbonTab>
      <RibbonTab>公式</RibbonTab>
      <RibbonTab>数据</RibbonTab>
      <RibbonTab>审阅</RibbonTab>
      <ActiveTab>视图</ActiveTab>
      <RibbonTab>帮助</RibbonTab>
      <RibbonTab>网易有道翻译</RibbonTab>
      <SearchHint><BulbIcon />操作说明搜索</SearchHint>
      <ShareButton>
        <ShareIcon />
        <ShareLabel>共享</ShareLabel>
        <Chevron color="#333" />
      </ShareButton>
    </TabBar>

    <Ribbon>
      <Group $w={384}>
        <GroupBody $pad={14}>
          <Big w={72} active icon={<NormalIcon />} lines={['普通']} />
          <Big w={72} icon={<PageBreakIcon />} lines={['分页', '预览']} />
          <Big w={96} icon={<PageLayoutIcon />} lines={['页面布局']} />
          <Big w={118} icon={<CustomViewIcon />} lines={['自定义视图']} />
        </GroupBody>
        <GroupLabel>工作簿视图</GroupLabel>
      </Group>
      <GroupSep />
      <Group $w={226}>
        <GroupBody>
          <CheckGrid>
            <Check label="直尺" off />
            <Check label="标题" />
            <Check label="网格线" />
            <span />
            <Check label="编辑栏" />
          </CheckGrid>
        </GroupBody>
        <GroupLabel>显示</GroupLabel>
      </Group>
      <GroupSep />
      <Group $w={266}>
        <GroupBody $pad={24}>
          <Big w={50} icon={<MagnifierIcon />} lines={['缩', '放']} />
          <Big w={94} icon={<HundredIcon />} lines={['100%']} />
          <Big w={76} icon={<ZoomSelectionIcon />} lines={['缩放到', '选定区域']} />
        </GroupBody>
        <GroupLabel>缩放</GroupLabel>
      </Group>
      <GroupSep />
      <Group $w={761}>
        <GroupBody $pad={14}>
          <Big w={96} icon={<NewWindowIcon />} lines={['新建窗口']} />
          <Big w={96} icon={<ArrangeIcon />} lines={['全部重排']} />
          <Big w={96} icon={<FreezeIcon />} lines={['冻结窗格']} chevron />
          <SmallColumn $w={146} $pad={8}>
            <Small w={30} icon={<SplitIcon />} label="拆分" />
            <Small w={30} icon={<HideIcon />} label="隐藏" />
            <Small off w={30} icon={<UnhideIcon />} label="取消隐藏" />
          </SmallColumn>
          <ThinSep />
          <SmallColumn $w={194} $pad={13}>
            <Small off w={31} icon={<SideBySideIcon />} label="并排查看" />
            <Small off w={31} icon={<SyncScrollIcon />} label="同步滚动" />
            <Small off w={31} icon={<ResetPosIcon />} label="重设窗口位置" />
          </SmallColumn>
          <ThinSep />
          <Big w={108} icon={<SwitchWindowIcon />} lines={['切换窗口']} chevron />
        </GroupBody>
        <GroupLabel>窗口</GroupLabel>
      </Group>
      <GroupSep />
      <Group $w={98}>
        <GroupBody>
          <Big w={98} icon={<MacroIcon />} lines={['宏']} chevron />
        </GroupBody>
        <GroupLabel>宏</GroupLabel>
      </Group>
      <GroupSep />
      <CollapseArrow>
        <svg width="18" height="10" viewBox="0 0 18 10"><path d="M1 9.5L9 1L17 9.5" fill="none" stroke="#444" strokeWidth="1.4" /></svg>
      </CollapseArrow>
    </Ribbon>

    <FormulaBar>
      <NameBox>D3<CaretDown /></NameBox>
      <BarDots><GripDots /></BarDots>
      <FnBox>
        <CrossMark />
        <TickMark />
        <FnMark>fx</FnMark>
      </FnBox>
      <FormulaInput>test7<DoubleChevron /></FormulaInput>
    </FormulaBar>

    <SheetArea>
      <SheetGrid>
        <CornerCell />
        {COLS.map((c) => <ColHead key={c || 'end'}>{c}</ColHead>)}

        <RowHead>1</RowHead>
        <TitleCell>资金信息</TitleCell>
        <TrailingCells />

        <RowHead $frozen>2</RowHead>
        {HEADS.map((h) => <HeadCell key={h}>{h}</HeadCell>)}
        <TrailingCells frozen />

        {ROWS.map(([n, a, b, c]) => (
          <React.Fragment key={n}>
            <RowHead>{n}</RowHead>
            <DataCell>{a}</DataCell>
            <DataCell $flag={n === 9}>{b}</DataCell>
            <DataCell>{c}</DataCell>
            {Array.from({ length: BLANK_DATA_COLS }, (_, i) => <DataCell key={i} />)}
            <TrailingCells />
          </React.Fragment>
        ))}

        <RowHead />
        <DataCell />
        <DataCell $flag />
        <DataCell $tall>2025年突发公共卫生事件应急经费</DataCell>
        {Array.from({ length: BLANK_DATA_COLS }, (_, i) => <DataCell key={i} />)}
        <TrailingCells />
      </SheetGrid>
      <VScroll>
        <ScrollButton $h={27} $top="2px"><ScrollArrow dir="up" /></ScrollButton>
        <ScrollButton $h={35} $top="13px" />
        <ScrollButton $h={28} $top="auto"><ScrollArrow dir="down" /></ScrollButton>
      </VScroll>
    </SheetArea>

    <TabStrip>
      <TabNav>
        <ScrollArrow dir="left" color="#c8c8c8" size={13} />
        <ScrollArrow dir="right" color="#c8c8c8" size={13} />
      </TabNav>
      <SheetTab>资金信息</SheetTab>
      <AddSheet><AddSheetIcon /></AddSheet>
      <GripZone><GripDots /></GripZone>
      <HScroll>
        <ScrollButton $w={28}><ScrollArrow dir="left" /></ScrollButton>
        <HThumb />
        <ScrollButton $w={30}><ScrollArrow dir="right" /></ScrollButton>
      </HScroll>
    </TabStrip>

    <StatusBar>
      <StatusReady>就绪</StatusReady>
      <AccessItem><AccessIcon />辅助功能: 调查</AccessItem>
      <DisplayItem><DisplayIcon />显示器设置</DisplayItem>
      <ViewButton $left={33} $active><GridViewIcon /></ViewButton>
      <ViewButton><LayoutViewIcon /></ViewButton>
      <ViewButton><BreakViewIcon /></ViewButton>
      <ZoomSlider><SliderIcon /></ZoomSlider>
      <ZoomPercent>100%</ZoomPercent>
    </StatusBar>
  </Window>
);

export default App;
